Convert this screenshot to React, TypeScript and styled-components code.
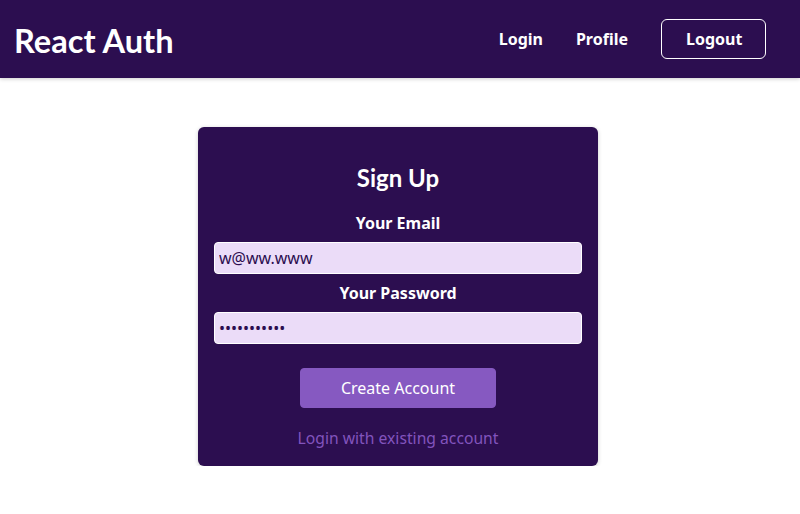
import React from "react";
import styled, { createGlobalStyle } from "styled-components";

const Global = createGlobalStyle`
  * { box-sizing: border-box; }
  html, body { margin: 0; padding: 0; background: #ffffff; }
  body { font-family: "Noto Sans", "Open Sans", sans-serif; }
`;

const Header = styled.header`
  height: 78px;
  background: #2c0e50;
  display: flex;
  align-items: center;
  justify-content: space-between;
  padding: 0 34px 0 14px;
  box-shadow: 0 1px 4px rgba(0, 0, 0, 0.2);
`;

const Logo = styled.div`
  font-family: "Lato", sans-serif;
  font-weight: 700;
  font-size: 32.6px;
  color: #ffffff;
  margin-top: 3px;
`;

const Nav = styled.nav`
  display: flex;
  align-items: center;
  gap: 33px;
`;

const NavLink = styled.a`
  color: #ffffff;
  font-weight: 700;
  font-size: 16px;
  line-height: 22px;
  text-decoration: none;
`;

const NavButton = styled.button`
  font: inherit;
  font-weight: 700;
  font-size: 16px;
  line-height: 22px;
  color: #ffffff;
  background: transparent;
  border: 1px solid #ffffff;
  border-radius: 6px;
  padding: 8px 24px;
  height: 40px;
  width: 105px;
`;

const Main = styled.main`
  display: flex;
  justify-content: center;
  padding: 49px 4px 0 0;
`;

const Card = styled.section`
  width: 400px;
  background: #2c0e50;
  border-radius: 6px;
  box-shadow: 0 1px 4px rgba(0, 0, 0, 0.2);
  padding: 16px;
  display: flex;
  flex-direction: column;
  align-items: center;
  text-align: center;
`;

const Title = styled.h1`
  font-family: "Lato", sans-serif;
  font-weight: 700;
  font-size: 24px;
  line-height: 30px;
  color: #ffffff;
  margin: 20px 0 19px;
`;

const Control = styled.div`
  width: 100%;
  margin-bottom: 8px;
`;

const Label = styled.label`
  display: block;
  color: #ffffff;
  font-weight: 700;
  font-size: 16px;
  line-height: 22px;
  margin-bottom: 8px;
`;

const Input = styled.input`
  display: block;
  width: 100%;
  font-family: "Noto Sans", sans-serif;
  font-size: 16px;
  line-height: 22px;
  height: 32px;
  background: #ebdcf8;
  color: #2c0e50;
  border: 1px solid #ffffff;
  border-radius: 4px;
  padding: 4px;
  text-align: left;
  outline: none;
`;

const Actions = styled.div`
  display: flex;
  flex-direction: column;
  align-items: center;
  margin-top: 16px;
`;

const Submit = styled.button`
  font-family: "Noto Sans", sans-serif;
  font-size: 16px;
  line-height: 22px;
  color: #ffffff;
  background: #8659c1;
  border: 1px solid #8659c1;
  border-radius: 4px;
  width: 196px;
  height: 40px;
  padding: 8px 0;
`;

const Toggle = styled.button`
  font-family: "Noto Sans", sans-serif;
  font-size: 15.7px;
  line-height: 22px;
  color: #8254bd;
  background: transparent;
  border: none;
  padding: 1px 6px;
  margin-top: 18px;
`;

export default function App() {
  return (
    <>
      <Global />
      <Header>
        <Logo>React Auth</Logo>
        <Nav>
          <NavLink href="#">Login</NavLink>
          <NavLink href="#">Profile</NavLink>
          <NavButton>Logout</NavButton>
        </Nav>
      </Header>
      <Main>
        <Card>
          <Title>Sign Up</Title>
          <Control>
            <Label htmlFor="email">Your Email</Label>
            <Input id="email" type="email" defaultValue="w@ww.www" />
          </Control>
          <Control>
            <Label htmlFor="password">Your Password</Label>
            <Input id="password" type="password" defaultValue="12345678901" />
          </Control>
          <Actions>
            <Submit>Create Account</Submit>
            <Toggle>Login with existing account</Toggle>
          </Actions>
        </Card>
      </Main>
    </>
  );
}
